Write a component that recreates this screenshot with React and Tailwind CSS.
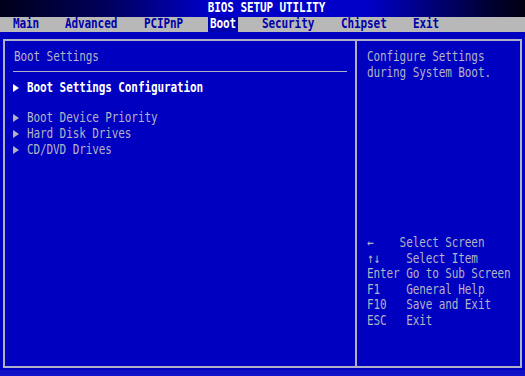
const menus = ["Main", "Advanced", "PCIPnP", "Boot", "Security", "Chipset", "Exit"];

const menuX = {
  Main: "w-[65px] pl-[13px]",
  Advanced: "w-[79px]",
  PCIPnP: "w-[66px]",
  Boot: "w-[52px]",
  Security: "w-[79px]",
  Chipset: "w-[72px]",
  Exit: "w-[40px]",
};

const bootItems = ["Boot Device Priority", "Hard Disk Drives", "CD/DVD Drives"];

const helpLines = [
  "←    Select Screen",
  "↑↓    Select Item",
  "Enter Go to Sub Screen",
  "F1    General Help",
  "F10   Save and Exit",
  "ESC   Exit",
];

function Line({ children, className = "" }) {
  return (
    <div className={`whitespace-pre scale-y-[1.25] ${className}`}>{children}</div>
  );
}

function Arrow({ white }) {
  return (
    <svg width="6" height="8" viewBox="0 0 6 8" className="mr-[8px] shrink-0">
      <path d="M0 0 L6 4 L0 8 Z" fill={white ? "#ffffff" : "#b4b4c4"} />
    </svg>
  );
}

export default function App() {
  return (
    <div
      className="w-[525px] h-[376px] flex flex-col bg-[#0000c0] text-[11px] tracking-[-0.1px] overflow-hidden"
      style={{ fontFamily: '"DejaVu Sans Mono", "Liberation Mono", monospace' }}
    >
      {/* title */}
      <div className="h-[17px] flex items-center justify-center bg-[linear-gradient(to_right,#00001a,#00005a_20%,#0000c8_40%,#0000c8_70%,#00003a_92%,#000010)]">
        <Line className="font-bold text-white pl-[8px]">BIOS SETUP UTILITY</Line>
      </div>

      {/* menu bar */}
      <div className="h-[15px] flex items-stretch bg-[#b8b8b8] font-bold">
        {menus.map((m) => (
          <div key={m} className={`flex items-center ${menuX[m]}`}>
            <span
              className={
                m === "Boot"
                  ? "bg-[#0000b0] text-white h-full flex items-center pl-[2px] pr-[2px] -ml-[2px]"
                  : "text-[#0000a8]"
              }
            >
              <Line>{m}</Line>
            </span>
          </div>
        ))}
      </div>

      {/* frame */}
      <div className="mt-[7px] mx-[3px] h-[329px] border-2 border-[#b0b0c8] flex">
        <div className="w-[352px] border-r-2 border-[#b0b0c8] pl-[8px] pr-[8px] text-[#b4b4c4]">
          <div className="h-[31px] flex items-end pb-[6px] border-b border-[#b0b0c8] pl-[1px]">
            <Line>Boot Settings</Line>
          </div>
          <div className="mt-[8px] h-[16px] flex items-center text-white font-bold">
            <Arrow white />
            <Line>Boot Settings Configuration</Line>
          </div>
          <div className="mt-[14px] flex flex-col">
            {bootItems.map((b) => (
              <div key={b} className="h-[16px] flex items-center">
                <Arrow />
                <Line>{b}</Line>
              </div>
            ))}
          </div>
        </div>
        <div className="flex-1 pl-[10px] text-[#b4b4c4] flex flex-col">
          <div className="mt-[8px] leading-[16px]">
            <Line>Configure Settings</Line>
            <Line>during System Boot.</Line>
          </div>
          <div className="mt-[154px] leading-[15.6px]">
            {helpLines.map((h) => (
              <Line key={h}>{h}</Line>
            ))}
          </div>
        </div>
      </div>

      <div className="flex-1 mt-[2px] bg-[#1010c8]" />
    </div>
  );
}
